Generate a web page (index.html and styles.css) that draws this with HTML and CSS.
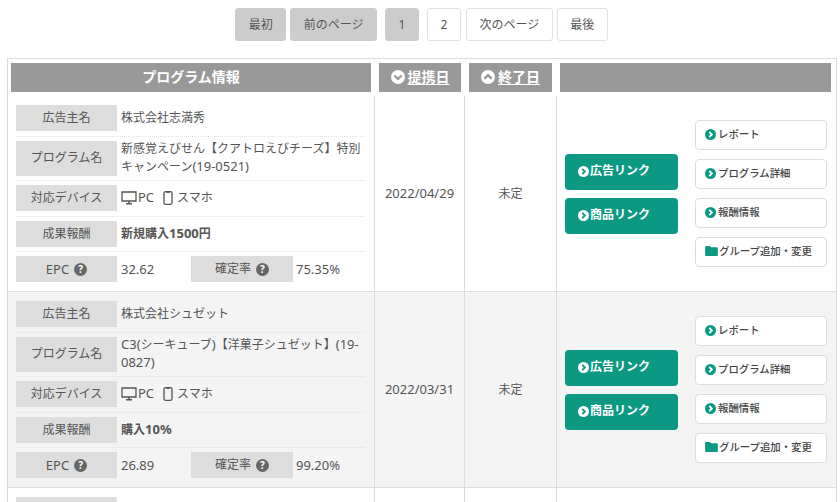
FILE: index.html
```html
<!DOCTYPE html>
<html lang="ja">
<head>
<meta charset="utf-8">
<title>プログラム一覧</title>
<link rel="stylesheet" href="styles.css">
</head>
<body>
<svg class="defs" width="0" height="0">
  <symbol id="c-right" viewBox="0 0 16 16"><circle cx="8" cy="8" r="8" fill="currentColor"/><path d="M6.2 4.2 10 8l-3.800 3.800" fill="none" stroke="var(--chev)" stroke-width="2.600"/></symbol>
  <symbol id="c-down" viewBox="0 0 16 16"><circle cx="8" cy="8" r="8" fill="#fff"/><path d="M3.900 6.300 8 10.300l4.100-4" fill="none" stroke="#999" stroke-width="2.600"/></symbol>
  <symbol id="c-up" viewBox="0 0 16 16"><circle cx="8" cy="8" r="8" fill="#fff"/><path d="M3.900 9.800 8 5.800l4.100 4" fill="none" stroke="#999" stroke-width="2.600"/></symbol>
  <symbol id="pc" viewBox="0 0 16 14"><path d="M1 1h14v9H1z" fill="none" stroke="#555" stroke-width="1.300"/><path d="M5 12.800h6M8 10v2.800" stroke="#555" stroke-width="1.500"/></symbol>
  <symbol id="sp" viewBox="0 0 10 14"><rect x="1" y=".7" width="8" height="12.600" rx="1.500" fill="none" stroke="#555" stroke-width="1.300"/><path d="M3.500 1.500h3" stroke="#555"/></symbol>
  <symbol id="folder" viewBox="0 0 14 11"><path d="M0 1a1 1 0 0 1 1-1h4l1.500 1.500H13a1 1 0 0 1 1 1V10a1 1 0 0 1-1 1H1a1 1 0 0 1-1-1z" fill="#0b9984"/></symbol>
</svg>

<nav class="pager">
  <a class="page off">最初</a>
  <a class="page off">前のページ</a>
  <a class="page off num sep">1</a>
  <a class="page num sep">2</a>
  <a class="page">次のページ</a>
  <a class="page">最後</a>
</nav>

<main class="panel">
  <div class="head">
    <div class="hcell c1">プログラム情報</div>
    <div class="hcell c2"><svg class="hicon"><use href="#c-down"/></svg><u>提携日</u></div>
    <div class="hcell c3"><svg class="hicon"><use href="#c-up"/></svg><u>終了日</u></div>
    <div class="hcell c4"></div>
  </div>

  <section class="row">
    <div class="info">
      <div class="field"><div class="label">広告主名</div><div class="val">株式会社志満秀</div></div>
      <div class="field tall"><div class="label">プログラム名</div><div class="val"><span>新感覚えびせん【クアトロえびチーズ】特別</span><span>キャンペーン</span><span class="l">(19-0521)</span></div></div>
      <div class="field"><div class="label">対応デバイス</div><div class="val"><svg class="i-pc"><use href="#pc"/></svg><span class="l">PC</span><svg class="i-sp"><use href="#sp"/></svg>スマホ</div></div>
      <div class="field"><div class="label">成果報酬</div><div class="val strong">新規購入<span class="l">1500</span>円</div></div>
      <div class="field last"><div class="label"><span class="l">EPC</span><span class="q">?</span></div><div class="val num-v l">32.62</div><div class="label second">確定率<span class="q">?</span></div><div class="val l">75.35%</div></div>
    </div>
    <div class="date l">2022/04/29</div>
    <div class="date end">未定</div>
    <div class="actions">
      <div class="links">
        <a class="cta"><svg class="ci"><use href="#c-right"/></svg>広告リンク</a>
        <a class="cta"><svg class="ci"><use href="#c-right"/></svg>商品リンク</a>
      </div>
      <div class="tools">
        <a class="tool"><svg class="ti"><use href="#c-right"/></svg>レポート</a>
        <a class="tool"><svg class="ti"><use href="#c-right"/></svg>プログラム詳細</a>
        <a class="tool"><svg class="ti"><use href="#c-right"/></svg>報酬情報</a>
        <a class="tool"><svg class="fi"><use href="#folder"/></svg>グループ追加・変更</a>
      </div>
    </div>
  </section>

  <section class="row alt">
    <div class="info">
      <div class="field"><div class="label">広告主名</div><div class="val">株式会社シュゼット</div></div>
      <div class="field tall"><div class="label">プログラム名</div><div class="val"><span class="l">C3(</span>シーキューブ<span class="l">)</span>【洋菓子シュゼット】<span class="l">(19-</span><span class="l">0827)</span></div></div>
      <div class="field"><div class="label">対応デバイス</div><div class="val"><svg class="i-pc"><use href="#pc"/></svg><span class="l">PC</span><svg class="i-sp"><use href="#sp"/></svg>スマホ</div></div>
      <div class="field"><div class="label">成果報酬</div><div class="val strong">購入<span class="l">10%</span></div></div>
      <div class="field last"><div class="label"><span class="l">EPC</span><span class="q">?</span></div><div class="val num-v l">26.89</div><div class="label second">確定率<span class="q">?</span></div><div class="val l">99.20%</div></div>
    </div>
    <div class="date l">2022/03/31</div>
    <div class="date end">未定</div>
    <div class="actions">
      <div class="links">
        <a class="cta"><svg class="ci"><use href="#c-right"/></svg>広告リンク</a>
        <a class="cta"><svg class="ci"><use href="#c-right"/></svg>商品リンク</a>
      </div>
      <div class="tools">
        <a class="tool"><svg class="ti"><use href="#c-right"/></svg>レポート</a>
        <a class="tool"><svg class="ti"><use href="#c-right"/></svg>プログラム詳細</a>
        <a class="tool"><svg class="ti"><use href="#c-right"/></svg>報酬情報</a>
        <a class="tool"><svg class="fi"><use href="#folder"/></svg>グループ追加・変更</a>
      </div>
    </div>
  </section>

  <section class="row">
    <div class="info">
      <div class="field"><div class="label"></div><div class="val"></div></div>
    </div>
    <div class="date"></div>
    <div class="date end"></div>
    <div class="actions"></div>
  </section>
</main>
</body>
</html>
```

FILE: styles.css
```css
* { box-sizing: border-box; }
html, body { height: 502px; overflow: hidden; }
body {
  margin: 0;
  padding: 8px 0 0 7px;
  background: #fff;
  color: #555;
  font: 12px/18px "Noto Sans", "Noto Sans CJK JP", sans-serif;
}
.defs { position: absolute; }
.l { font-size: 13px; line-height: 1; }

.pager { display: flex; justify-content: center; gap: 4px; width: 829px; height: 33px; }
.page {
  display: flex; align-items: center; justify-content: center;
  height: 33px; padding: 0 12.500px;
  border: 1px solid #e2e2e2; border-radius: 3px;
  background: #fff;
}
.page.off { background: #ccc; border-color: #ccc; }
.page.num { width: 34px; padding: 0; }
.page.sep { margin-left: 4px; }
.page.num + .page:not(.num) { margin-left: 1px; }

.panel {
  width: 830px; height: 444px; margin-top: 17px; padding-top: 4px;
  border: 1px solid #ddd; border-bottom: 0;
  overflow: hidden;
}
.head { display: flex; height: 29px; margin-bottom: 4px; }
.hcell {
  display: flex; align-items: center; justify-content: center;
  height: 29px; padding-bottom: 1px; background: #999; color: #fff;
  font-size: 14px; font-weight: 700;
}
.hcell u { text-underline-offset: 2px; }
.c1 { width: 360px; margin-left: 3px; }
.c2 { width: 82px; margin-left: 8px; }
.c3 { width: 83px; margin-left: 8px; }
.c4 { width: 271px; margin-left: 8px; }
.hicon { width: 14px; height: 14px; margin-right: 3px; }

.row { display: flex; height: 196px; border-bottom: 1px solid #ddd; }
.row.alt { background: #f4f4f4; }
.info { width: 367px; padding: 9px 9px 0 8px; border-right: 1px solid #ddd; }
.field {
  display: flex; align-items: center;
  height: 31.500px; padding-bottom: 4.500px; margin-bottom: 4px;
  border-bottom: 1px dotted #e2e2e2;
}
.field.tall { height: 40.500px; }
.field.last { height: 26px; border-bottom: 0; padding-bottom: 0; margin-bottom: 0; }
.label {
  flex: none; display: flex; align-items: center; justify-content: center; gap: 5px;
  width: 101px; height: 26px; background: #ddd;
}
.tall .label { height: 35px; }
.val { padding-left: 4px; flex: 1; line-height: 18px; }
.val.num-v { flex: none; width: 74px; }
.label.second { width: 102px; }
.second + .val { padding-left: 3px; }
.strong { font-weight: 700; }
.q {
  display: inline-flex; align-items: center; justify-content: center;
  width: 13px; height: 13px; border-radius: 50%;
  background: #666; color: #fff; font-size: 10px; font-weight: 700; line-height: 1;
}
.i-pc { width: 16px; height: 14px; margin-right: 1px; vertical-align: -3px; }
.i-sp { width: 10px; height: 14px; margin: 0 4px 0 9px; vertical-align: -3px; }

.date {
  display: flex; align-items: center; justify-content: center;
  width: 90px; border-right: 1px solid #ddd;
}
.date.end { width: 92px; }
.actions {
  display: flex; align-items: center; gap: 17px;
  padding-left: 8px; flex: 1;
}
.links { display: flex; flex-direction: column; gap: 8px; }
.cta {
  --chev: #0b9984;
  display: flex; align-items: center;
  width: 113px; height: 36px; padding: 0 0 1px 13px; border-radius: 4px;
  background: #0b9984; color: #fff; font-weight: 700;
}
.ci { width: 11px; height: 11px; color: #fff; margin-right: 1px; }
.tools { display: flex; flex-direction: column; gap: 8.500px; }
.tool {
  --chev: #fff;
  display: flex; align-items: center;
  width: 132px; height: 30.500px; padding: 0 0 2px 9px;
  background: #fff; border: 1px solid #ddd; border-radius: 4px;
  color: #444; font-size: 10.400px; font-weight: 500;
}
.ti { width: 11px; height: 11px; color: #0b9984; margin-right: 2px; }
.fi { width: 13px; height: 10px; margin-right: 1px; }
```
